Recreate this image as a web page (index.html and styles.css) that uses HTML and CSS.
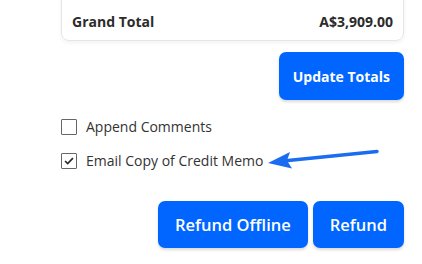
FILE: index.html
```html
<!DOCTYPE html>
<html>
<head>
<meta charset="utf-8">
<link rel="stylesheet" href="styles.css">
</head>
<body>
<div class="page">
  <div class="card">
    <div class="total-row">
      <span class="label">Grand Total</span>
      <span class="value">A$3,909.00</span>
    </div>
  </div>
  <div class="actions">
    <button class="btn">Update Totals</button>
  </div>
  <div class="options">
    <label class="opt"><span class="box"></span><span>Append Comments</span></label>
    <label class="opt"><span class="box checked"><svg viewBox="0 0 16 16" width="14" height="14"><path d="M3.5 8 L6.5 11 L12.5 4.8" fill="none" stroke="#2b2b2b" stroke-width="2"/></svg></span><span>Email Copy of Credit Memo</span></label>
  </div>
  <div class="actions bottom">
    <button class="btn big">Refund Offline</button>
    <button class="btn big">Refund</button>
  </div>
  <svg class="arrow" width="422" height="264" viewBox="0 0 422 264">
    <path d="M377 151.5 L288 160.5" stroke="#1a6cf0" stroke-width="3.5" stroke-linecap="round" fill="none"/>
    <path d="M268 163 L290 152 L287 160.5 L292 168.5 Z" fill="#1a6cf0"/>
  </svg>
</div>
</body>
</html>
```

FILE: styles.css
```css
* { box-sizing: border-box; }
html, body { margin: 0; padding: 0; background: #fff; }
body { font-family: "Open Sans", "Liberation Sans", sans-serif; color: #333; }
.page { position: relative; width: 422px; height: 264px; overflow: hidden; padding: 0 18px 0 61px; }
.card {
  margin-top: -20px;
  border: 1px solid #e6e6e9;
  border-radius: 8px;
  box-shadow: 0 2px 4px rgba(0,0,0,0.05);
  padding: 31px 10px 8px 10px;
}
.total-row { display: flex; justify-content: space-between; font-weight: 700; font-size: 14px; line-height: 20px; color: #2b2b2b; }
.actions { display: flex; justify-content: flex-end; gap: 5px; margin-top: 11px; }
.btn {
  font-family: "Open Sans", sans-serif;
  font-weight: 700;
  font-size: 14px;
  color: #fff;
  background: #0066ff;
  border: none;
  border-radius: 7px;
  height: 48px;
  padding: 0 14px;
  box-shadow: 0 2px 3px rgba(0,0,0,0.15);
}
.btn.big { font-weight: 600; font-size: 16.5px; height: 47px; padding: 0 17px; }
.options { margin-top: 19px; display: flex; flex-direction: column; gap: 18px; }
.opt { display: flex; align-items: center; gap: 9px; font-size: 14px; line-height: 16px; color: #333; }
.box { width: 16px; height: 16px; border: 1px solid #666; border-radius: 1px; display: inline-flex; align-items: center; justify-content: center; }
.box svg { display: block; }
.bottom { margin-top: 32px; }
.arrow { position: absolute; left: 0; top: 0; pointer-events: none; }
```
